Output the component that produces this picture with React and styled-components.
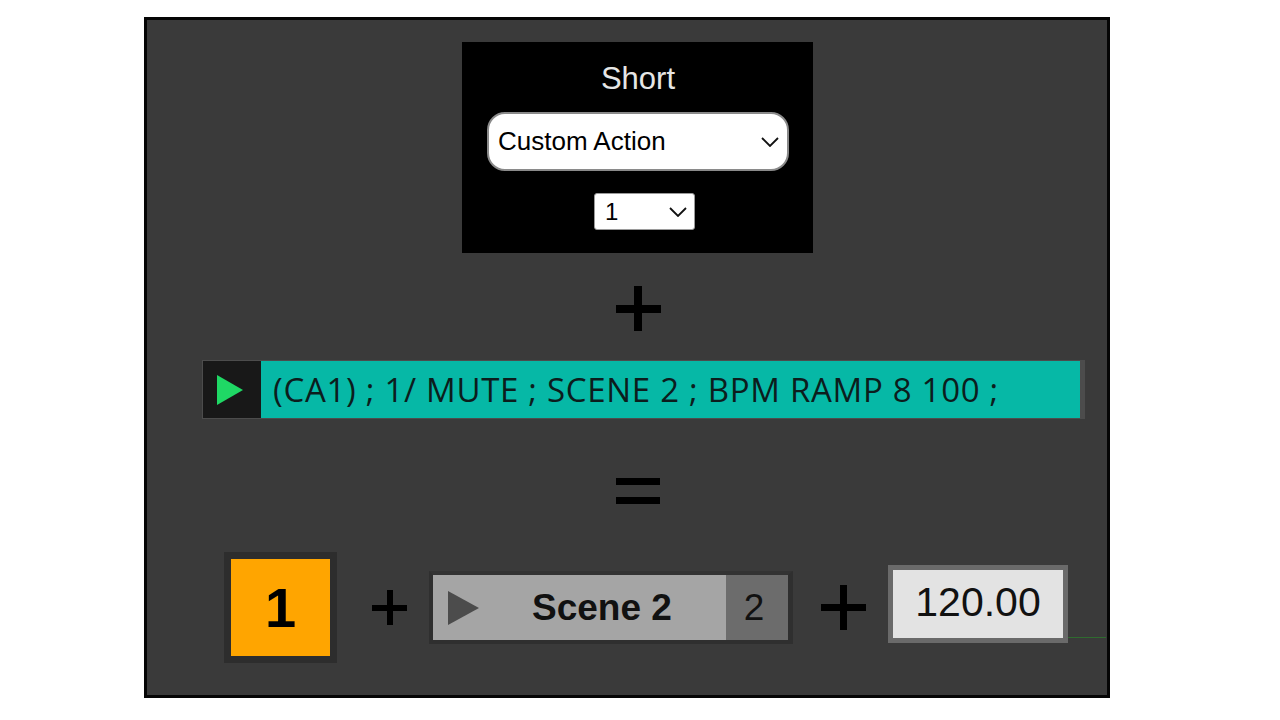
import styled, { createGlobalStyle } from 'styled-components';

const Global = createGlobalStyle`
  html, body {
    margin: 0;
    padding: 0;
    background: #ffffff;
  }
  body {
    font-family: "Liberation Sans", Arial, sans-serif;
  }
`;

const Frame = styled.div`
  box-sizing: border-box;
  margin: 17px 0 0 144px;
  width: 966px;
  height: 681px;
  border: 3px solid #050505;
  background: #3a3a3a;
  display: flex;
  flex-direction: column;
  align-items: center;
  padding: 22px 0 0 20px;
`;

const Panel = styled.div`
  box-sizing: border-box;
  width: 351px;
  height: 211px;
  background: #000;
  display: flex;
  flex-direction: column;
  align-items: center;
  padding-top: 20px;
`;

const Title = styled.div`
  color: #e6e6e6;
  font-size: 31px;
  line-height: 34px;
  margin-left: 2px;
`;

const Select = styled.div`
  box-sizing: border-box;
  width: ${({ $w }) => $w}px;
  height: ${({ $h }) => $h}px;
  margin-top: ${({ $mt }) => $mt}px;
  background: #fff;
  border: ${({ $big }) => ($big ? '2px solid #8a8a8a' : '1px solid #9a9a9a')};
  border-radius: ${({ $big }) => ($big ? 18 : 3)}px;
  display: flex;
  align-items: center;
  justify-content: space-between;
  padding: ${({ $big }) => ($big ? '0 8px 0 9px' : '0 7px 0 10px')};
  color: #000;
  font-size: ${({ $big }) => ($big ? 26 : 24)}px;
  margin-left: ${({ $ml }) => $ml || 0}px;
`;

const Chevron = () => (
  <svg width="18" height="10" viewBox="0 0 18 10">
    <path d="M1 1 L9 9 L17 1" fill="none" stroke="#111" strokeWidth="1.8" />
  </svg>
);

const Op = styled.div`
  position: relative;
  width: ${({ $size }) => $size}px;
  height: ${({ $size }) => $size}px;
  margin: ${({ $m }) => $m};
  flex-shrink: 0;
  &::before {
    content: '';
    position: absolute;
    left: 0;
    right: 0;
    top: calc(50% - ${({ $t }) => $t / 2}px);
    height: ${({ $t }) => $t}px;
    background: #000;
  }
  &::after {
    content: '';
    position: absolute;
    top: 0;
    bottom: 0;
    left: calc(50% - ${({ $t }) => $t / 2}px);
    width: ${({ $t }) => $t}px;
    background: #000;
  }
`;

const Equals = styled.div`
  width: 44px;
  height: 26px;
  margin-top: 59px;
  border-top: 7px solid #000;
  border-bottom: 7px solid #000;
  box-sizing: border-box;
  margin-left: 2px;
`;

const Bar = styled.div`
  box-sizing: border-box;
  display: flex;
  width: 883px;
  height: 59px;
  margin: 29px 0 0 13px;
  border: 1px solid #4c4c4c;
  border-right-width: 5px;
  background: #1a1a1a;
`;

const PlayCell = styled.div`
  width: 54px;
  flex-shrink: 0;
  display: flex;
  align-items: center;
  justify-content: center;
  background: #181818;
  padding-right: 4px;
`;

const Chain = styled.div`
  flex: 1;
  background: #06b8a6;
  display: flex;
  align-items: center;
  padding-left: 12px;
  color: #0c1d1d;
  font-family: "Open Sans", sans-serif;
  font-weight: 500;
  font-size: 33px;
  letter-spacing: 0.7px;
  white-space: nowrap;
  padding-bottom: 1px;
`;

const Row = styled.div`
  align-self: flex-start;
  display: flex;
  align-items: center;
  margin: 48px 0 0 57px;
`;

const Pad = styled.div`
  box-sizing: border-box;
  width: 113px;
  height: 111px;
  border: 7px solid #2d2d2d;
  background: #ffa500;
  display: flex;
  align-items: center;
  justify-content: center;
  font-size: 56px;
  font-weight: 700;
  color: #000;
`;

const Clip = styled.div`
  box-sizing: border-box;
  display: flex;
  width: 364px;
  height: 73px;
  border: 4px solid #2f2f2f;
  border-right-width: 5px;
  border-top-color: #333;
`;

const ClipName = styled.div`
  flex: 1;
  background: #a5a5a5;
  display: flex;
  align-items: center;
  padding-left: 15px;
  font-size: 37px;
  font-weight: 700;
  color: #111;
  gap: 53px;
`;

const ClipIndex = styled.div`
  box-sizing: border-box;
  width: 62px;
  background: #6c6c6c;
  display: flex;
  align-items: center;
  justify-content: center;
  font-size: 37px;
  color: #111;
  padding-right: 6px;
`;

const Tempo = styled.div`
  position: relative;
  box-sizing: border-box;
  width: 180px;
  height: 78px;
  margin-bottom: 8px;
  border: 5px solid #6a6a6a;
  background: #e3e3e3;
  display: flex;
  align-items: center;
  justify-content: center;
  font-size: 41px;
  color: #111;
  padding-bottom: 2px;
  &::after {
    content: '';
    position: absolute;
    left: 175px;
    bottom: 0;
    width: 38px;
    height: 1px;
    background: #2f6b2f;
  }
`;

export default function App() {
  return (
    <>
      <Global />
      <Frame>
        <Panel>
          <Title>Short</Title>
          <Select $big $w={302} $h={59} $mt={16} $ml={2}>
            <span>Custom Action</span>
            <Chevron />
          </Select>
          <Select $w={101} $h={37} $mt={22} $ml={15}>
            <span>1</span>
            <Chevron />
          </Select>
        </Panel>
        <Op $size={45} $t={8} $m="33px 0 0 2px" />
        <Bar>
          <PlayCell>
            <svg width="26" height="30" viewBox="0 0 26 30">
              <path d="M0 0 L26 15 L0 30 Z" fill="#1fd865" />
            </svg>
          </PlayCell>
          <Chain>(CA1) ; 1/ MUTE ; SCENE 2 ; BPM RAMP 8 100 ;</Chain>
        </Bar>
        <Equals />
        <Row>
          <Pad>1</Pad>
          <Op $size={35} $t={6} $m="0 22px 0 35px" />
          <Clip>
            <ClipName>
              <svg width="31" height="34" viewBox="0 0 31 34">
                <path d="M0 0 L31 17 L0 34 Z" fill="#4c4c4c" />
              </svg>
              <span>Scene 2</span>
            </ClipName>
            <ClipIndex>2</ClipIndex>
          </Clip>
          <Op $size={45} $t={7} $m="0 22px 0 28px" />
          <Tempo>120.00</Tempo>
        </Row>
      </Frame>
    </>
  );
}
